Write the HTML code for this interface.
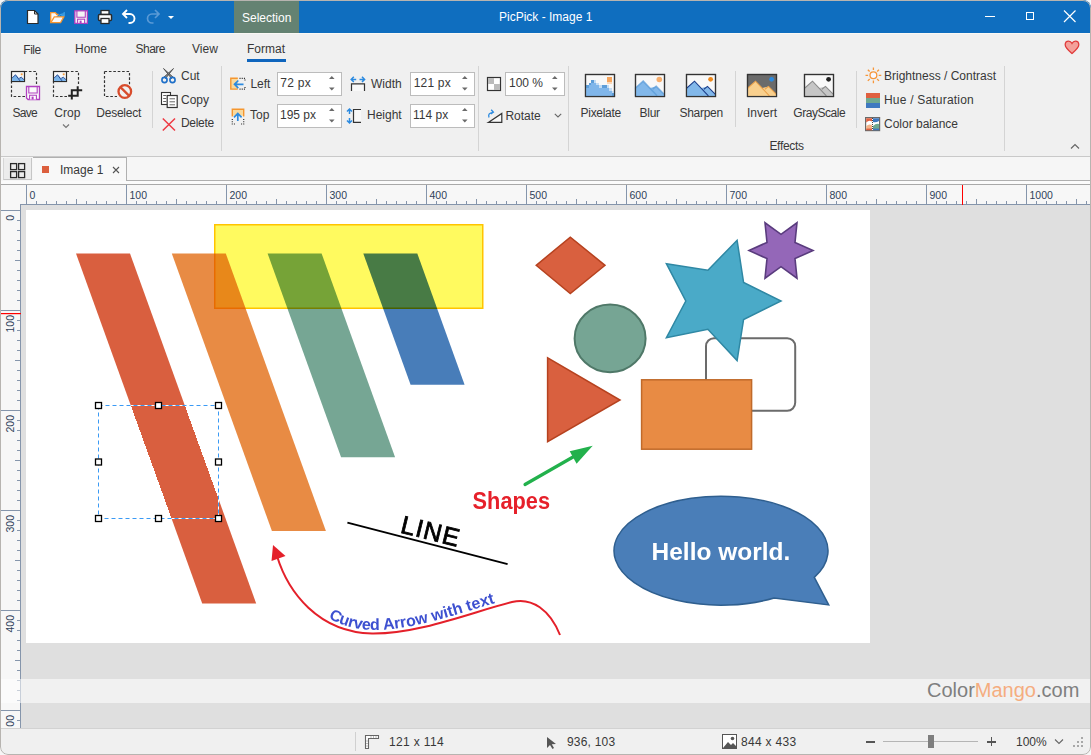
<!DOCTYPE html>
<html><head><meta charset="utf-8">
<style>
html,body{margin:0;padding:0;}
body{width:1091px;height:755px;overflow:hidden;position:relative;background:#f6f6f6;font-family:"Liberation Sans",sans-serif;color:#383838;}
.a{position:absolute;}
.t{position:absolute;white-space:nowrap;line-height:1;}
#frame{position:absolute;left:0;top:0;width:1091px;height:755px;border-radius:8px;overflow:hidden;background:#f0f0f0;}
.inp{position:absolute;background:#fff;border:1px solid #bcbcbc;box-sizing:border-box;}
.sep{position:absolute;width:1px;background:#d4d4d4;}
svg{position:absolute;overflow:visible;}
</style></head>
<body>
<div id="frame">
<!--TITLE-->
<div class="a" style="left:0;top:0;width:1091px;height:33px;background:#0f6ebf;"></div>
<div class="a" style="left:234px;top:1px;width:65px;height:32px;background:#648272;"></div>
<div class="t" style="left:242px;top:12px;font-size:12px;color:#fff;">Selection</div>
<div class="t" style="left:499px;top:10.5px;font-size:12px;color:#fff;">PicPick - Image 1</div>
<div class="a" style="left:0;top:33px;width:1091px;height:1px;background:#faf8f4;"></div>

<!-- QAT icons -->
<svg style="left:0;top:0" width="200" height="33">
 <path d="M27.5,10.5 h7 l3.5,3.5 v9.5 h-10.5 z" fill="#fff" stroke="#2a2a2a" stroke-width="1.2"/>
 <path d="M34.5,10.5 v3.5 h3.5" fill="none" stroke="#2a2a2a" stroke-width="1"/>
 <path d="M50.7,22.6 V12.6 H55.4 L56.8,14.5 H58.5" fill="#f8f8f8" stroke="#f7962e" stroke-width="1.3"/>
 <path d="M50.8,22.6 L54.3,16.8 H63.8 L60.6,22.6 Z" fill="#f8f8f8" stroke="#f7962e" stroke-width="1.3"/>
 <path d="M58.6,16.2 q1.8,-2.6 5.2,-2.2 M64.2,12 v3.4 h-3" fill="none" stroke="#3a9ee6" stroke-width="1.3"/>
 <rect x="74.8" y="10.8" width="12.6" height="12.6" fill="#f4f4f4" stroke="#b040c0" stroke-width="1.3"/>
 <path d="M76.9,10.8 V17.3 H85.3 V10.8" fill="none" stroke="#b040c0" stroke-width="1.1"/>
 <rect x="77.6" y="19.2" width="7" height="4.2" fill="#fff" stroke="#b040c0" stroke-width="1.1"/>
 <rect x="79.6" y="20.6" width="2" height="2.8" fill="#b040c0"/>
 <rect x="101" y="10.5" width="8" height="4" fill="#fff" stroke="#2a2a2a" stroke-width="1.3"/>
 <rect x="98.5" y="14.5" width="13" height="6" rx="1" fill="#fff" stroke="#2a2a2a" stroke-width="1.5"/>
 <rect x="101" y="18.5" width="8" height="5" fill="#fff" stroke="#2a2a2a" stroke-width="1.3"/>
 <path d="M127,10 l-4,4 l4,4 M123,14 h7 a4.5,4.5 0 0 1 0,9 h-1.5" fill="none" stroke="#fff" stroke-width="1.9"/>
 <path d="M155,10 l4,4 l-4,4 M159,14 h-7 a4.5,4.5 0 0 0 0,9 h1.5" fill="none" stroke="#5a9ad6" stroke-width="1.7"/>
 <path d="M168,16 h6 l-3,3 z" fill="#fff"/>
</svg>
<!-- window controls -->
<div class="a" style="left:985px;top:16px;width:10px;height:1px;background:#fff;"></div>
<div class="a" style="left:1026px;top:12px;width:8px;height:8px;box-sizing:border-box;border:1px solid #fff;"></div>
<svg style="left:1060px;top:6px" width="20" height="20"><path d="M4,4.5 L15.5,16 M15.5,4.5 L4,16" stroke="#fff" stroke-width="1.2"/></svg>
<!-- ribbon tabs -->
<div class="t" style="left:23.3px;top:44px;font-size:12px;letter-spacing:-0.5px;">File</div>
<div class="t" style="left:75px;top:43px;font-size:12px;">Home</div>
<div class="t" style="left:135.5px;top:43px;font-size:12px;letter-spacing:-0.5px;">Share</div>
<div class="t" style="left:192px;top:43px;font-size:12px;">View</div>
<div class="t" style="left:247px;top:43px;font-size:12px;">Format</div>
<div class="a" style="left:247px;top:59px;width:39px;height:3px;background:#0f65bd;"></div>
<!-- heart -->
<svg style="left:1062px;top:38px" width="20" height="20"><path d="M10,15.5 C6,12 3.2,9.8 3.2,6.8 C3.2,4.8 4.7,3.2 6.6,3.2 C8.2,3.2 9.3,4.2 10,5.4 C10.7,4.2 11.8,3.2 13.4,3.2 C15.3,3.2 16.8,4.8 16.8,6.8 C16.8,9.8 14,12 10,15.5 Z" fill="#f4a09a" stroke="#e03c3c" stroke-width="1.3"/></svg>
<!-- ribbon group 1: Save Crop Deselect -->
<svg style="left:0;top:60px" width="150" height="80">
 <path d="M11.5,21 V36.5 H26 M24.5,11.5 H36.5 V26" fill="none" stroke="#333" stroke-width="1.2" stroke-dasharray="2.6,1.8"/>
 <rect x="11.5" y="11.5" width="13" height="10" fill="#f8f8f8" stroke="#2b2b2b" stroke-width="1.2"/>
 <path d="M12.1,20.9 V18 L15.5,14.8 L19.5,18.6 L21.3,17.2 L23.9,19.6 V20.9 Z" fill="#7ab4ea"/>
 <path d="M12.1,18 L15.5,14.8 L20,20.9 M19.2,18.3 L21.3,17.2 L23.9,19.6" fill="none" stroke="#1c3d8a" stroke-width="0.9"/>
 <rect x="20.8" y="13.4" width="1.8" height="1.8" fill="#f39a3b"/>
 <path d="M26.5,26.5 H39.5 V39.5 H28 L26.5,38 Z" fill="#fafafa" stroke="#b040c0" stroke-width="1.3"/>
 <path d="M28.8,26.5 V33 H37.2 V26.5" fill="none" stroke="#b040c0" stroke-width="1.1"/>
 <path d="M29.6,39.5 V35.2 H36.4 V39.5" fill="#fff" stroke="#b040c0" stroke-width="1.1"/>
 <rect x="31.6" y="36.6" width="2" height="2.9" fill="#b040c0"/>
 <path d="M53.5,21 V36.5 H68 M66.5,11.5 H78.5 V26" fill="none" stroke="#333" stroke-width="1.2" stroke-dasharray="2.6,1.8"/>
 <rect x="53.5" y="11.5" width="13" height="10" fill="#f8f8f8" stroke="#2b2b2b" stroke-width="1.2"/>
 <path d="M54.1,20.9 V18 L57.5,14.8 L61.5,18.6 L63.3,17.2 L65.9,19.6 V20.9 Z" fill="#7ab4ea"/>
 <path d="M54.1,18 L57.5,14.8 L62,20.9 M61.2,18.3 L63.3,17.2 L65.9,19.6" fill="none" stroke="#1c3d8a" stroke-width="0.9"/>
 <rect x="62.8" y="13.4" width="1.8" height="1.8" fill="#f39a3b"/>
 <path d="M71.8,39.6 V30.2 H82.2 M77.7,26.3 V35.7 H68.2" fill="none" stroke="#222" stroke-width="2"/>
 <path d="M104.5,11.5 H129.5 V26 M104.5,11.5 V36.5 H117" fill="none" stroke="#333" stroke-width="1.2" stroke-dasharray="2.6,1.8"/>
 <circle cx="124.8" cy="31.5" r="6.3" fill="#f0f0f0" stroke="#d84c2c" stroke-width="2.3"/>
 <path d="M120.4,27.1 L129.2,35.9" stroke="#d84c2c" stroke-width="2.3"/>
 <path d="M63,64.5 l3,3 l3,-3" fill="none" stroke="#777" stroke-width="1.2"/>
</svg>
<div class="t" style="left:12.4px;top:106.5px;font-size:12px;letter-spacing:-0.7px;">Save</div>
<div class="t" style="left:54.3px;top:106.5px;font-size:12px;">Crop</div>
<div class="t" style="left:96.3px;top:106.5px;font-size:12px;letter-spacing:-0.25px;">Deselect</div>
<div class="sep" style="left:152px;top:71px;height:57px;"></div>
<!-- Cut Copy Delete -->
<svg style="left:150px;top:60px" width="40" height="80">
 <path d="M13.5,8.5 L21.5,18.5 L23,17 Z M23.5,8.5 L15.5,18.5 L14,17 Z" fill="#888" stroke="#444" stroke-width="0.8" stroke-linejoin="round"/>
 <circle cx="14.5" cy="20" r="2.6" fill="none" stroke="#1e6fc8" stroke-width="1.6"/>
 <circle cx="22.5" cy="20" r="2.6" fill="none" stroke="#1e6fc8" stroke-width="1.6"/>
 <rect x="11.5" y="32.5" width="9" height="12" fill="#fff" stroke="#333" stroke-width="1.1"/>
 <path d="M13.2,35.5 h3 M13.2,38.5 h3 M13.2,41.5 h3" stroke="#555" stroke-width="0.9"/>
 <rect x="17.2" y="35.5" width="10" height="12" fill="#fff" stroke="#333" stroke-width="1.2"/>
 <path d="M19.5,38.8 h5.5 M19.5,41.8 h5.5 M19.5,44.8 h5.5" stroke="#555" stroke-width="0.9"/>
 <path d="M12.8,58.5 L25,70.5 M25,58.5 L12.8,70.5" stroke="#ee3a44" stroke-width="1.5"/>
</svg>
<div class="t" style="left:181px;top:70px;font-size:12px;">Cut</div>
<div class="t" style="left:181px;top:94px;font-size:12px;">Copy</div>
<div class="t" style="left:181px;top:117.4px;font-size:12px;letter-spacing:-0.3px;">Delete</div>
<div class="sep" style="left:221px;top:66px;height:85px;"></div>
<!-- Left/Top -->
<svg style="left:220px;top:60px" width="60" height="70">
 <rect x="10.8" y="18.3" width="7" height="10.8" fill="#f8d99e"/>
 <path d="M17.8,18.3 H10.8 V29.1 H17.8" fill="none" stroke="#f5962e" stroke-width="1.4"/>
 <path d="M19.5,18.3 H25 V21.5 M19.5,29.1 H25 V26" fill="none" stroke="#333" stroke-width="1.2" stroke-dasharray="1.1,1.1"/>
 <path d="M23.5,24.3 H14.5 M18.3,20.5 L14.5,24.3 L18.3,28.1" fill="none" stroke="#2b8ae0" stroke-width="1.7"/>
 <rect x="12.3" y="49.3" width="11.4" height="6.5" fill="#f8d99e"/>
 <path d="M12.3,56.5 V49.3 H23.7 V56.5" fill="none" stroke="#f5962e" stroke-width="1.4"/>
 <path d="M12.3,59 V64 H15 M23.7,59 V64 H21" fill="none" stroke="#333" stroke-width="1.2" stroke-dasharray="1.1,1.1"/>
 <path d="M17.8,61 V53.8 M14,57.3 L17.8,53.5 L21.6,57.3" fill="none" stroke="#2b8ae0" stroke-width="1.7"/>
</svg>
<div class="t" style="left:250.4px;top:77.5px;font-size:12px;">Left</div>
<div class="t" style="left:250px;top:109px;font-size:12px;">Top</div>
<div class="inp" style="left:277px;top:72px;width:65px;height:24px;"></div>
<div class="inp" style="left:277px;top:104px;width:65px;height:24px;"></div>
<div class="t" style="left:280.3px;top:77px;font-size:12px;letter-spacing:0.25px;">72 px</div>
<div class="t" style="left:280px;top:109px;font-size:12px;">195 px</div>
<!-- Width/Height -->
<svg style="left:340px;top:60px" width="30" height="70">
 <path d="M11.2,19.4 h5 M19.5,19.4 h5 M13.8,16.8 l-2.6,2.6 l2.6,2.6 M22,16.8 l2.6,2.6 l-2.6,2.6" fill="none" stroke="#2b8ae0" stroke-width="1.5"/>
 <path d="M11.5,31 V23.8 H24.5 V31" fill="#f8f8f8" stroke="#333" stroke-width="1.2"/>
 <path d="M9.5,49 v5 M9.5,58 v5 M7,51.6 l2.5,-2.6 l2.5,2.6 M7,60.4 l2.5,2.6 l2.5,-2.6" fill="none" stroke="#2b8ae0" stroke-width="1.5"/>
 <path d="M21,49.5 H13.5 V62.3 H21" fill="#f8f8f8" stroke="#333" stroke-width="1.2"/>
</svg>
<div class="t" style="left:371px;top:78px;font-size:12px;">Width</div>
<div class="t" style="left:367px;top:109px;font-size:12px;">Height</div>
<div class="inp" style="left:410px;top:72px;width:65px;height:24px;"></div>
<div class="inp" style="left:410px;top:104px;width:65px;height:24px;"></div>
<div class="t" style="left:413.7px;top:77px;font-size:12px;letter-spacing:0.2px;">121 px</div>
<div class="t" style="left:413px;top:109px;font-size:12px;">114 px</div>
<div class="sep" style="left:478px;top:66px;height:85px;"></div>
<!-- zoom / rotate -->
<svg style="left:480px;top:60px" width="30" height="70">
 <rect x="7.5" y="17.5" width="13" height="13" fill="#fff" stroke="#333" stroke-width="1.2"/>
 <rect x="8" y="18" width="6" height="6" fill="#bbb"/><rect x="14" y="24" width="6" height="6" fill="#bbb"/>
 <path d="M8.3,62.4 L21.8,53.4 V62.4 Z" fill="#f8f8f8" stroke="#333" stroke-width="1.2"/>
 <path d="M9,57.5 q-1.5,-4.5 4,-5.2 M11.2,49.8 l2.2,2.4 l-2.6,1.8" fill="none" stroke="#2b8ae0" stroke-width="1.3"/>
</svg>
<div class="inp" style="left:505px;top:72px;width:60px;height:24px;"></div>
<div class="t" style="left:509px;top:77px;font-size:12px;">100 %</div>
<div class="t" style="left:505.4px;top:109.5px;font-size:12px;">Rotate</div>
<svg style="left:550px;top:108px" width="14" height="14"><path d="M4.8,5.8 l3.2,3.2 l3.2,-3.2" fill="none" stroke="#666" stroke-width="1.1"/></svg>
<div class="sep" style="left:568px;top:66px;height:85px;"></div>

<!-- spinners -->
<svg style="left:0;top:60px" width="600" height="80">
 <g fill="#6a6a6a">
 <path d="M329,19 l2.8,-3 l2.8,3 z M329,27.5 l2.8,3 l2.8,-3 z"/>
 <path d="M329,51 l2.8,-3 l2.8,3 z M329,59.5 l2.8,3 l2.8,-3 z"/>
 <path d="M462,19 l2.8,-3 l2.8,3 z M462,27.5 l2.8,3 l2.8,-3 z"/>
 <path d="M462,51 l2.8,-3 l2.8,3 z M462,59.5 l2.8,3 l2.8,-3 z"/>
 <path d="M552,19 l2.8,-3 l2.8,3 z M552,27.5 l2.8,3 l2.8,-3 z"/>
 </g>
</svg>
<!-- effects -->
<svg style="left:570px;top:60px" width="290" height="60">
 <!-- pixelate -->
 <rect x="15.5" y="14.5" width="29" height="22" fill="#f8f8f8" stroke="#333" stroke-width="1.2"/>
 <g shape-rendering="crispEdges"><rect x="21.1" y="20.2" width="2.6" height="2.6" fill="#5e9ed9"/><rect x="23.7" y="20.2" width="2.6" height="2.6" fill="#c4dcf3"/><rect x="18.5" y="22.8" width="2.6" height="2.6" fill="#5e9ed9"/><rect x="21.1" y="22.8" width="2.6" height="2.6" fill="#80b6ea"/><rect x="23.7" y="22.8" width="2.6" height="2.6" fill="#80b6ea"/><rect x="26.3" y="22.8" width="2.6" height="2.6" fill="#c4dcf3"/><rect x="15.9" y="25.4" width="2.6" height="2.6" fill="#5e9ed9"/><rect x="18.5" y="25.4" width="2.6" height="2.6" fill="#80b6ea"/><rect x="21.1" y="25.4" width="2.6" height="2.6" fill="#80b6ea"/><rect x="23.7" y="25.4" width="2.6" height="2.6" fill="#80b6ea"/><rect x="26.3" y="25.4" width="2.6" height="2.6" fill="#80b6ea"/><rect x="28.9" y="25.4" width="2.6" height="2.6" fill="#c4dcf3"/><rect x="31.5" y="25.4" width="2.6" height="2.6" fill="#5e9ed9"/><rect x="34.1" y="25.4" width="2.6" height="2.6" fill="#5e9ed9"/><rect x="36.7" y="25.4" width="2.6" height="2.6" fill="#c4dcf3"/><rect x="15.9" y="28.0" width="2.6" height="2.6" fill="#80b6ea"/><rect x="18.5" y="28.0" width="2.6" height="2.6" fill="#80b6ea"/><rect x="21.1" y="28.0" width="2.6" height="2.6" fill="#80b6ea"/><rect x="23.7" y="28.0" width="2.6" height="2.6" fill="#80b6ea"/><rect x="26.3" y="28.0" width="2.6" height="2.6" fill="#80b6ea"/><rect x="28.9" y="28.0" width="2.6" height="2.6" fill="#80b6ea"/><rect x="31.5" y="28.0" width="2.6" height="2.6" fill="#80b6ea"/><rect x="34.1" y="28.0" width="2.6" height="2.6" fill="#80b6ea"/><rect x="36.7" y="28.0" width="2.6" height="2.6" fill="#80b6ea"/><rect x="39.3" y="28.0" width="2.6" height="2.6" fill="#c4dcf3"/><rect x="15.9" y="30.6" width="2.6" height="2.6" fill="#80b6ea"/><rect x="18.5" y="30.6" width="2.6" height="2.6" fill="#80b6ea"/><rect x="21.1" y="30.6" width="2.6" height="2.6" fill="#80b6ea"/><rect x="23.7" y="30.6" width="2.6" height="2.6" fill="#80b6ea"/><rect x="26.3" y="30.6" width="2.6" height="2.6" fill="#80b6ea"/><rect x="28.9" y="30.6" width="2.6" height="2.6" fill="#80b6ea"/><rect x="31.5" y="30.6" width="2.6" height="2.6" fill="#80b6ea"/><rect x="34.1" y="30.6" width="2.6" height="2.6" fill="#80b6ea"/><rect x="36.7" y="30.6" width="2.6" height="2.6" fill="#80b6ea"/><rect x="39.3" y="30.6" width="2.6" height="2.6" fill="#80b6ea"/><rect x="41.9" y="30.6" width="2.6" height="2.6" fill="#c4dcf3"/><rect x="15.9" y="33.2" width="2.6" height="2.6" fill="#80b6ea"/><rect x="18.5" y="33.2" width="2.6" height="2.6" fill="#80b6ea"/><rect x="21.1" y="33.2" width="2.6" height="2.6" fill="#80b6ea"/><rect x="23.7" y="33.2" width="2.6" height="2.6" fill="#80b6ea"/><rect x="26.3" y="33.2" width="2.6" height="2.6" fill="#80b6ea"/><rect x="28.9" y="33.2" width="2.6" height="2.6" fill="#80b6ea"/><rect x="31.5" y="33.2" width="2.6" height="2.6" fill="#80b6ea"/><rect x="34.1" y="33.2" width="2.6" height="2.6" fill="#80b6ea"/><rect x="36.7" y="33.2" width="2.6" height="2.6" fill="#80b6ea"/><rect x="39.3" y="33.2" width="2.6" height="2.6" fill="#80b6ea"/><rect x="41.9" y="33.2" width="2.6" height="2.6" fill="#5e9ed9"/></g>
 <rect x="15.5" y="14.5" width="29" height="22" fill="none" stroke="#333" stroke-width="1.2"/>
 <rect x="37" y="17" width="5" height="5" fill="#f6a55c"/><rect x="37" y="22" width="5" height="2" fill="#fbd8b8"/>
 <!-- blur -->
 <rect x="65.5" y="14.5" width="29" height="22" fill="#f8f8f8" stroke="#333" stroke-width="1.2"/>
 <path d="M64.8,36 V28.6 L73.2,21.2 L79.9,28 L86.2,26.4 L94.1,34.3 V36 Z" fill="#82b8ea"/><path d="M65.0,28.5 L73.2,21.2 L87.1,35.8 M82.6,29.2 L86.2,26.4 L94.1,34.3" fill="none" stroke="#5e9ed9" stroke-width="1.6" opacity="0.8"/>
 <circle cx="89.3" cy="19.5" r="2.8" fill="#f6a55c" opacity="0.9"/>
 <rect x="65.5" y="14.5" width="29" height="22" fill="none" stroke="#333" stroke-width="1.2"/>
 <!-- sharpen -->
 <rect x="116.5" y="14.5" width="29" height="22" fill="#f8f8f8" stroke="#333" stroke-width="1.2"/>
 <path d="M116.1,36 V28.6 L124.5,21.2 L131.2,28 L137.5,26.4 L145.4,34.3 V36 Z" fill="#82b8ea"/><path d="M116.3,28.5 L124.5,21.2 L138.4,35.8 M133.9,29.2 L137.5,26.4 L145.4,34.3" fill="none" stroke="#1c3d8a" stroke-width="1.1" />
 <circle cx="140.6" cy="19.3" r="2.4" fill="#f08a1c"/>
 <rect x="116.5" y="14.5" width="29" height="22" fill="none" stroke="#333" stroke-width="1.2"/>
 <!-- invert -->
 <rect x="177.5" y="14.5" width="29" height="22" fill="#6b6b6b" stroke="#333" stroke-width="1.2"/>
 <path d="M177.1,36 V28.6 L185.5,21.2 L192.2,28 L198.5,26.4 L206.4,34.3 V36 Z" fill="#f9d08e"/><path d="M177.3,28.5 L185.5,21.2 L199.4,35.8 M194.9,29.2 L198.5,26.4 L206.4,34.3" fill="none" stroke="#eba24c" stroke-width="1.1" />
 <circle cx="201.6" cy="19.3" r="2.4" fill="#2b8ae0"/>
 <rect x="177.5" y="14.5" width="29" height="22" fill="none" stroke="#333" stroke-width="1.2"/>
 <!-- grayscale -->
 <rect x="234.5" y="14.5" width="29" height="22" fill="#f8f8f8" stroke="#333" stroke-width="1.2"/>
 <path d="M234.1,36 V28.6 L242.5,21.2 L249.2,28 L255.5,26.4 L263.4,34.3 V36 Z" fill="#c6c6c6"/><path d="M234.3,28.5 L242.5,21.2 L256.4,35.8 M251.9,29.2 L255.5,26.4 L263.4,34.3" fill="none" stroke="#8a8a8a" stroke-width="1.1" />
 <circle cx="258.6" cy="19.3" r="2.4" fill="#222"/>
 <rect x="234.5" y="14.5" width="29" height="22" fill="none" stroke="#333" stroke-width="1.2"/>
</svg>
<div class="t" style="left:580.6px;top:107px;font-size:12px;letter-spacing:-0.3px;">Pixelate</div>
<div class="t" style="left:639.6px;top:107px;font-size:12px;letter-spacing:-0.3px;">Blur</div>
<div class="t" style="left:679.5px;top:107px;font-size:12px;letter-spacing:-0.3px;">Sharpen</div>
<div class="sep" style="left:735px;top:71px;height:56px;"></div>
<div class="t" style="left:747px;top:107px;font-size:12px;">Invert</div>
<div class="t" style="left:793.3px;top:107px;font-size:12px;letter-spacing:-0.45px;">GrayScale</div>
<div class="t" style="left:769.4px;top:140px;font-size:12px;letter-spacing:-0.3px;">Effects</div>
<div class="sep" style="left:856px;top:71px;height:57px;"></div>
<!-- brightness etc -->
<svg style="left:860px;top:60px" width="30" height="75">
 <g stroke="#f7963a" stroke-width="1.3" fill="none">
 <circle cx="13.4" cy="15.3" r="3.4" fill="#f8f8ff"/>
 <path d="M18.70,15.30 L21.30,15.30 M17.15,19.05 L18.99,20.89 M13.40,20.60 L13.40,23.20 M9.65,19.05 L7.81,20.89 M8.10,15.30 L5.50,15.30 M9.65,11.55 L7.81,9.71 M13.40,10.00 L13.40,7.40 M17.15,11.55 L18.99,9.71 "/>
 </g>
 <rect x="6" y="33" width="14" height="5" fill="#e06040"/>
 <rect x="6" y="38" width="14" height="5" fill="#6fa890"/>
 <rect x="6" y="43" width="14" height="5" fill="#3f79c0"/>
 <rect x="5.6" y="57.6" width="14" height="13" fill="#fff" stroke="#6a6a6a" stroke-width="1.2"/>
 <path d="M6.2,58.2 H12 V61.5 Q9,59.5 6.2,62.5 Z" fill="#e06040"/>
 <path d="M6.2,66 Q9,63.5 12,65 V70 H6.2 Z" fill="#f4b58a"/><rect x="6.2" y="68.6" width="5.8" height="1.6" fill="#e06040"/>
 <path d="M13,58.2 H19 V61 Q16,63 13,62 Z" fill="#3f79c0"/>
 <path d="M13,66 Q16,63 19,64 V70 H13 Z" fill="#6fa890"/><rect x="13" y="68.6" width="6" height="1.6" fill="#3f79c0"/>
 <path d="M12.5,58 v12" stroke="#444" stroke-width="1" stroke-dasharray="1,1"/>
</svg>
<div class="t" style="left:884px;top:70px;font-size:12px;">Brightness / Contrast</div>
<div class="t" style="left:884px;top:94px;font-size:12px;letter-spacing:0.2px;">Hue / Saturation</div>
<div class="t" style="left:884px;top:118px;font-size:12px;">Color balance</div>
<div class="sep" style="left:1004px;top:66px;height:85px;"></div>
<svg style="left:1068px;top:140px" width="14" height="12"><path d="M3,8.5 l4,-4 l4,4" fill="none" stroke="#666" stroke-width="1.2"/></svg>
<div class="a" style="left:0;top:156px;width:1091px;height:1px;background:#c9c9c9;"></div>


<div class="a" style="left:0;top:157px;width:1091px;height:27px;background:#f6f6f6;"></div>
<div class="a" style="left:3px;top:158px;width:29px;height:22px;background:#ececec;border-left:1px solid #d6d6d6;border-right:1px solid #c6c6c6;border-bottom:1px solid #c6c6c6;box-sizing:border-box;"></div>
<svg style="left:0;top:150px" width="40" height="35"><g fill="none" stroke="#2a2a2a" stroke-width="1.3"><rect x="10.6" y="13.6" width="6" height="6"/><rect x="18.6" y="13.6" width="6" height="6"/><rect x="10.6" y="21.6" width="6" height="6"/><rect x="18.6" y="21.6" width="6" height="6"/></g></svg>
<div class="a" style="left:33px;top:157px;width:94px;height:24px;background:#f8f8f8;border-top:1px solid #b0b0b0;border-right:1px solid #b0b0b0;box-sizing:border-box;"></div>
<div class="a" style="left:127px;top:180px;width:964px;height:1px;background:#b0b0b0;"></div>
<div class="a" style="left:42px;top:166px;width:7px;height:7px;background:#dc5f3e;"></div>
<div class="t" style="left:60px;top:164px;font-size:12px;">Image 1</div>
<svg style="left:110px;top:163px" width="14" height="14"><path d="M3,4 l6,6 M9,4 l-6,6" stroke="#555" stroke-width="1.1"/></svg>
<div class="a" style="left:0;top:181px;width:1091px;height:3px;background:#fbfbfb;"></div>
<div class="a" style="left:0;top:184px;width:1091px;height:1px;background:#a9a9a9;"></div>

<div class="a" style="left:0;top:185px;width:1091px;height:20px;background:#f7f7f7;"></div>
<div class="a" style="left:0;top:205px;width:20px;height:523px;background:#f7f7f7;"></div>
<svg style="left:0;top:0" width="1091" height="755" shape-rendering="crispEdges">
<rect x="20" y="204" width="1071" height="1" fill="#8595ab"/>
<rect x="20" y="204" width="1" height="524" fill="#8595ab"/>
<path d="M26.5,185V204M36.5,201V204M46.5,201V204M56.5,201V204M66.5,201V204M76.5,199V204M86.5,201V204M96.5,201V204M106.5,201V204M116.5,201V204M126.5,185V204M136.5,201V204M146.5,201V204M156.5,201V204M166.5,201V204M176.5,199V204M186.5,201V204M196.5,201V204M206.5,201V204M216.5,201V204M226.5,185V204M236.5,201V204M246.5,201V204M256.5,201V204M266.5,201V204M276.5,199V204M286.5,201V204M296.5,201V204M306.5,201V204M316.5,201V204M326.5,185V204M336.5,201V204M346.5,201V204M356.5,201V204M366.5,201V204M376.5,199V204M386.5,201V204M396.5,201V204M406.5,201V204M416.5,201V204M426.5,185V204M436.5,201V204M446.5,201V204M456.5,201V204M466.5,201V204M476.5,199V204M486.5,201V204M496.5,201V204M506.5,201V204M516.5,201V204M526.5,185V204M536.5,201V204M546.5,201V204M556.5,201V204M566.5,201V204M576.5,199V204M586.5,201V204M596.5,201V204M606.5,201V204M616.5,201V204M626.5,185V204M636.5,201V204M646.5,201V204M656.5,201V204M666.5,201V204M676.5,199V204M686.5,201V204M696.5,201V204M706.5,201V204M716.5,201V204M726.5,185V204M736.5,201V204M746.5,201V204M756.5,201V204M766.5,201V204M776.5,199V204M786.5,201V204M796.5,201V204M806.5,201V204M816.5,201V204M826.5,185V204M836.5,201V204M846.5,201V204M856.5,201V204M866.5,201V204M876.5,199V204M886.5,201V204M896.5,201V204M906.5,201V204M916.5,201V204M926.5,185V204M936.5,201V204M946.5,201V204M956.5,201V204M966.5,201V204M976.5,199V204M986.5,201V204M996.5,201V204M1006.5,201V204M1016.5,201V204M1026.5,185V204M1036.5,201V204M1046.5,201V204M1056.5,201V204M1066.5,201V204M1076.5,199V204M1086.5,201V204M0,210.5H20M17,220.5H20M17,230.5H20M17,240.5H20M17,250.5H20M15,260.5H20M17,270.5H20M17,280.5H20M17,290.5H20M17,300.5H20M0,310.5H20M17,320.5H20M17,330.5H20M17,340.5H20M17,350.5H20M15,360.5H20M17,370.5H20M17,380.5H20M17,390.5H20M17,400.5H20M0,410.5H20M17,420.5H20M17,430.5H20M17,440.5H20M17,450.5H20M15,460.5H20M17,470.5H20M17,480.5H20M17,490.5H20M17,500.5H20M0,510.5H20M17,520.5H20M17,530.5H20M17,540.5H20M17,550.5H20M15,560.5H20M17,570.5H20M17,580.5H20M17,590.5H20M17,600.5H20M0,610.5H20M17,620.5H20M17,630.5H20M17,640.5H20M17,650.5H20M15,660.5H20M17,670.5H20M17,680.5H20M17,690.5H20M17,700.5H20M0,710.5H20M17,720.5H20" stroke="#8595ab" stroke-width="1" fill="none"/>
</svg>
<svg style="left:0;top:0" width="1091" height="755"><g font-family="Liberation Sans" font-size="10.5" fill="#2f3f5a">
<text x="29.5" y="199">0</text>
<text x="129.5" y="199">100</text>
<text x="229.5" y="199">200</text>
<text x="329.5" y="199">300</text>
<text x="429.5" y="199">400</text>
<text x="529.5" y="199">500</text>
<text x="629.5" y="199">600</text>
<text x="729.5" y="199">700</text>
<text x="829.5" y="199">800</text>
<text x="929.5" y="199">900</text>
<text x="1029.5" y="199">1000</text>
<text transform="translate(14,215) rotate(-90)" text-anchor="end">0</text>
<text transform="translate(14,315) rotate(-90)" text-anchor="end">100</text>
<text transform="translate(14,415) rotate(-90)" text-anchor="end">200</text>
<text transform="translate(14,515) rotate(-90)" text-anchor="end">300</text>
<text transform="translate(14,615) rotate(-90)" text-anchor="end">400</text>
<text transform="translate(14,715) rotate(-90)" text-anchor="end">00</text>
</g>
<rect x="962" y="185" width="1" height="20" fill="#f00"/>
<rect x="1" y="313" width="20" height="1.2" fill="#f00"/>
</svg>
<div class="a" style="left:21px;top:205px;width:1070px;height:523px;background:#dfdfdf;"></div>
<div class="a" style="left:26px;top:210px;width:844px;height:433px;background:#fff;"></div>

<svg style="left:0;top:0" width="1091" height="755">
 <defs><clipPath id="img"><rect x="26" y="210" width="844" height="433"/></clipPath></defs>
 <g clip-path="url(#img)">
 <path d="M76,253.5 L130,253.5 L256.2,603.5 L202.2,603.5 Z" fill="#d95f3f"/>
 <path d="M171.8,253.5 L225.8,253.5 L325.9,531 L271.9,531 Z" fill="#e88b44"/>
 <path d="M267.6,253.5 L321.6,253.5 L395.1,457.2 L341.1,457.2 Z" fill="#76a694"/>
 <path d="M363.3,253.5 L417.3,253.5 L464.6,384.7 L410.6,384.7 Z" fill="#487db9"/>
 <rect x="214.75" y="224.75" width="268" height="83.5" fill="#fffa5f" stroke="#ffc400" stroke-width="1.5" style="mix-blend-mode:multiply"/>
 <path d="M536.2,265.3 L570.3,237.1 L605,265.3 L570.3,293.6 Z" fill="#d9603f" stroke="#b6421f" stroke-width="1.5"/>
 <ellipse cx="610.1" cy="338.4" rx="35.5" ry="33.8" fill="#76a594" stroke="#4f7868" stroke-width="2"/>
 <path d="M547.6,357.9 L547.6,441.6 L620,400 Z" fill="#d9603f" stroke="#b6421f" stroke-width="1.5"/>
 <rect x="706" y="338.2" width="89.2" height="72.6" rx="8" fill="none" stroke="#6b6b6b" stroke-width="2"/>
 <path d="M737.1,240.3 L743.6,282.5 L781,301 L743.6,319.5 L737.1,360.5 L707.9,329.3 L666.4,337.7 L685.8,301 L666.4,263.7 L707.9,270.2 Z" fill="#4aaac8" stroke="#2f88a4" stroke-width="1.5" stroke-linejoin="miter"/>
 <rect x="641.6" y="379.8" width="110" height="69.4" fill="#e88b44" stroke="#c06a2a" stroke-width="1.5"/>
 <polygon points="813.0,250.5 795.0,258.6 797.0,278.2 781.0,266.7 765.0,278.2 767.0,258.6 749.0,250.5 767.0,242.4 765.0,222.8 781.0,234.3 797.0,222.8 795.0,242.4" fill="#9467b8" stroke="#5a3c7e" stroke-width="1.6"/>
 <path d="M525,484.5 L580,453" stroke="#22b14c" stroke-width="3.2" stroke-linecap="round"/>
 <path d="M592.7,445.8 L569.7,451.3 L576.6,463.7 Z" fill="#22b14c"/>
 <text x="472.6" y="509" font-family="Liberation Sans" font-weight="bold" font-size="23.5" textLength="77.4" lengthAdjust="spacingAndGlyphs" fill="#e6202a">Shapes</text>
 <path d="M347.4,522.6 L507.6,564.1" stroke="#000" stroke-width="2"/>
 <text transform="translate(399.5,532.5) rotate(13.8)" font-family="Liberation Sans" font-size="25" letter-spacing="1.2" fill="#000" stroke="#000" stroke-width="0.8">LINE</text>
 <path d="M814.3,577.4 L828.7,604.9 L774.2,598 A107,54.5 0 1 1 814.3,577.4 Z" fill="#4a7eb8" stroke="#2f5f8f" stroke-width="1.5"/>
 <text x="651.6" y="560.2" font-family="Liberation Sans" font-weight="bold" font-size="24.5" textLength="138.6" lengthAdjust="spacingAndGlyphs" fill="#fff">Hello world.</text>
 <path id="curve" d="M277,556 C288,592 318,632 372,633.5 C420,634 475,611 512,602 C532,597 550,610 560,635" fill="none" stroke="#e4202a" stroke-width="2"/>
 <path d="M273,545 L271.5,561 L285.5,556 Z" fill="#e4202a"/>
 <path id="tpath" d="M318,612 C335,626 360,629.5 380,627.5 C420,624 470,604 510,592" fill="none"/>
 <text font-family="Liberation Sans" font-weight="bold" font-size="16" fill="#3d50d0" dy="-3.5"><textPath href="#curve" startOffset="84">Curved Arrow with text</textPath></text>
 </g>
 <defs><clipPath id="selc"><rect x="98" y="405" width="121" height="114"/></clipPath></defs>
 <g clip-path="url(#selc)"><rect x="98" y="405" width="121" height="114" fill="#fff"/><path d="M76,253.5 L130,253.5 L256.2,603.5 L202.2,603.5 Z" fill="#d95f3f" shape-rendering="crispEdges"/></g>
 <rect x="98.5" y="405.5" width="120" height="113" fill="none" stroke="#fff" stroke-width="1"/>
 <rect x="98.5" y="405.5" width="120" height="113" fill="none" stroke="#3a9af5" stroke-width="1" stroke-dasharray="4,3"/>
 <g fill="#fff" stroke="#000" stroke-width="1.3">
 <rect x="95.5" y="402.5" width="6" height="6"/><rect x="155.5" y="402.5" width="6" height="6"/><rect x="215.5" y="402.5" width="6" height="6"/>
 <rect x="95.5" y="459" width="6" height="6"/><rect x="215.5" y="459" width="6" height="6"/>
 <rect x="95.5" y="515.5" width="6" height="6"/><rect x="155.5" y="515.5" width="6" height="6"/><rect x="215.5" y="515.5" width="6" height="6"/>
 </g>
</svg>


<div class="a" style="left:0;top:679px;width:1091px;height:24px;background:rgba(255,255,255,0.55);"></div>
<div class="t" style="left:927px;top:680px;font-size:20px;color:#7f7f7f;">Color<span style="color:#f5ad7f">Mango</span>.com</div>
<div class="a" style="left:0;top:728px;width:1091px;height:27px;background:#f0f0f0;border-top:1px solid #d2d2d2;box-sizing:border-box;"></div>
<div class="sep" style="left:355px;top:732px;height:19px;background:#d0d0d0;"></div>
<svg style="left:360px;top:730px" width="25" height="22"><path d="M5.5,5.5 H18.5 V8.5 H8.5 V18.5 H5.5 Z" fill="#fff" stroke="#666" stroke-width="1.1"/><path d="M11,6.5 v1 M13.5,6.5 v1 M16,6.5 v1 M6.5,11 h1 M6.5,13.5 h1 M6.5,16 h1" stroke="#777" stroke-width="1"/></svg>
<div class="t" style="left:389px;top:736px;font-size:12px;letter-spacing:0.35px;">121 x 114</div>
<svg style="left:542px;top:732px" width="20" height="20"><path d="M5,5 L5,16 L8,13 L10.5,17 L12,16 L9.8,12.3 L14,12 Z" fill="#555"/></svg>
<div class="t" style="left:567px;top:736px;font-size:12px;letter-spacing:0.2px;">936, 103</div>
<svg style="left:718px;top:730px" width="22" height="22"><rect x="4.5" y="4.5" width="14" height="14" fill="#fff" stroke="#555" stroke-width="1"/><path d="M5,18 L10,12 L13,15 L15,13 L18,16 V18 Z" fill="#555"/><circle cx="14.5" cy="8.5" r="1.8" fill="#555"/></svg>
<div class="t" style="left:741px;top:736px;font-size:12px;letter-spacing:0.3px;">844 x 433</div>
<div class="a" style="left:866px;top:741px;width:9px;height:1.5px;background:#555;"></div>
<div class="a" style="left:883px;top:741px;width:95px;height:1px;background:#b5b5b5;"></div>
<div class="a" style="left:928px;top:735px;width:6px;height:13px;background:#7e7e7e;"></div>
<div class="a" style="left:987px;top:741px;width:9px;height:1.5px;background:#555;"></div>
<div class="a" style="left:490.75px;top:737px;width:1.5px;height:9px;background:#555;transform:translateX(500px);"></div>
<div class="t" style="left:1016px;top:736px;font-size:12px;">100%</div>
<svg style="left:1052px;top:734px" width="14" height="14"><path d="M3,5.5 l4,4 l4,-4" fill="none" stroke="#666" stroke-width="1.1"/></svg>
<svg style="left:1070px;top:734px" width="18" height="18" shape-rendering="crispEdges"><g fill="#a8a8a8"><rect x="11" y="3" width="2" height="2"/><rect x="7" y="7" width="2" height="2"/><rect x="11" y="7" width="2" height="2"/><rect x="3" y="11" width="2" height="2"/><rect x="7" y="11" width="2" height="2"/><rect x="11" y="11" width="2" height="2"/></g></svg>

<div class="a" style="left:0;top:0;width:1091px;height:755px;box-sizing:border-box;border:1px solid #b7b4b0;border-radius:8px;"></div>
</div>
</body></html>
